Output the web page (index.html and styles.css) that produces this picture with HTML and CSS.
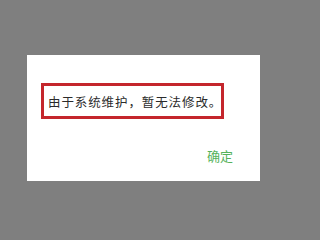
FILE: index.html
```html
<!DOCTYPE html>
<html lang="zh-CN">
<head>
<meta charset="utf-8">
<link rel="stylesheet" href="styles.css">
</head>
<body>
<div class="dialog">
  <div class="message">由于系统维护，暂无法修改。</div>
  <div class="actions"><span class="ok">确定</span></div>
</div>
</body>
</html>
```
FILE: styles.css
```css
html, body {
  margin: 0;
  padding: 0;
}
body {
  background: #7f7f7f;
  width: 287px;
  height: 215px;
  padding-top: 55px;
  padding-left: 27px;
  box-sizing: border-box;
  font-family: "Noto Sans CJK SC", "Noto Sans", sans-serif;
}
.dialog {
  width: 233px;
  height: 126px;
  background: #ffffff;
  box-sizing: border-box;
  padding: 28px 27px 0 14px;
  display: flex;
  flex-direction: column;
}
.message {
  width: 183px;
  height: 36px;
  box-sizing: border-box;
  border: 3px solid #c4262c;
  padding-left: 4px;
  display: flex;
  align-items: center;
  font-size: 12.5px;
  letter-spacing: 0.9px;
  color: #2b2b2b;
  white-space: nowrap;
}
.actions {
  display: flex;
  justify-content: flex-end;
  margin-top: 29px;
}
.ok {
  font-size: 13px;
  line-height: 16px;
  color: #55b25a;
}
```
